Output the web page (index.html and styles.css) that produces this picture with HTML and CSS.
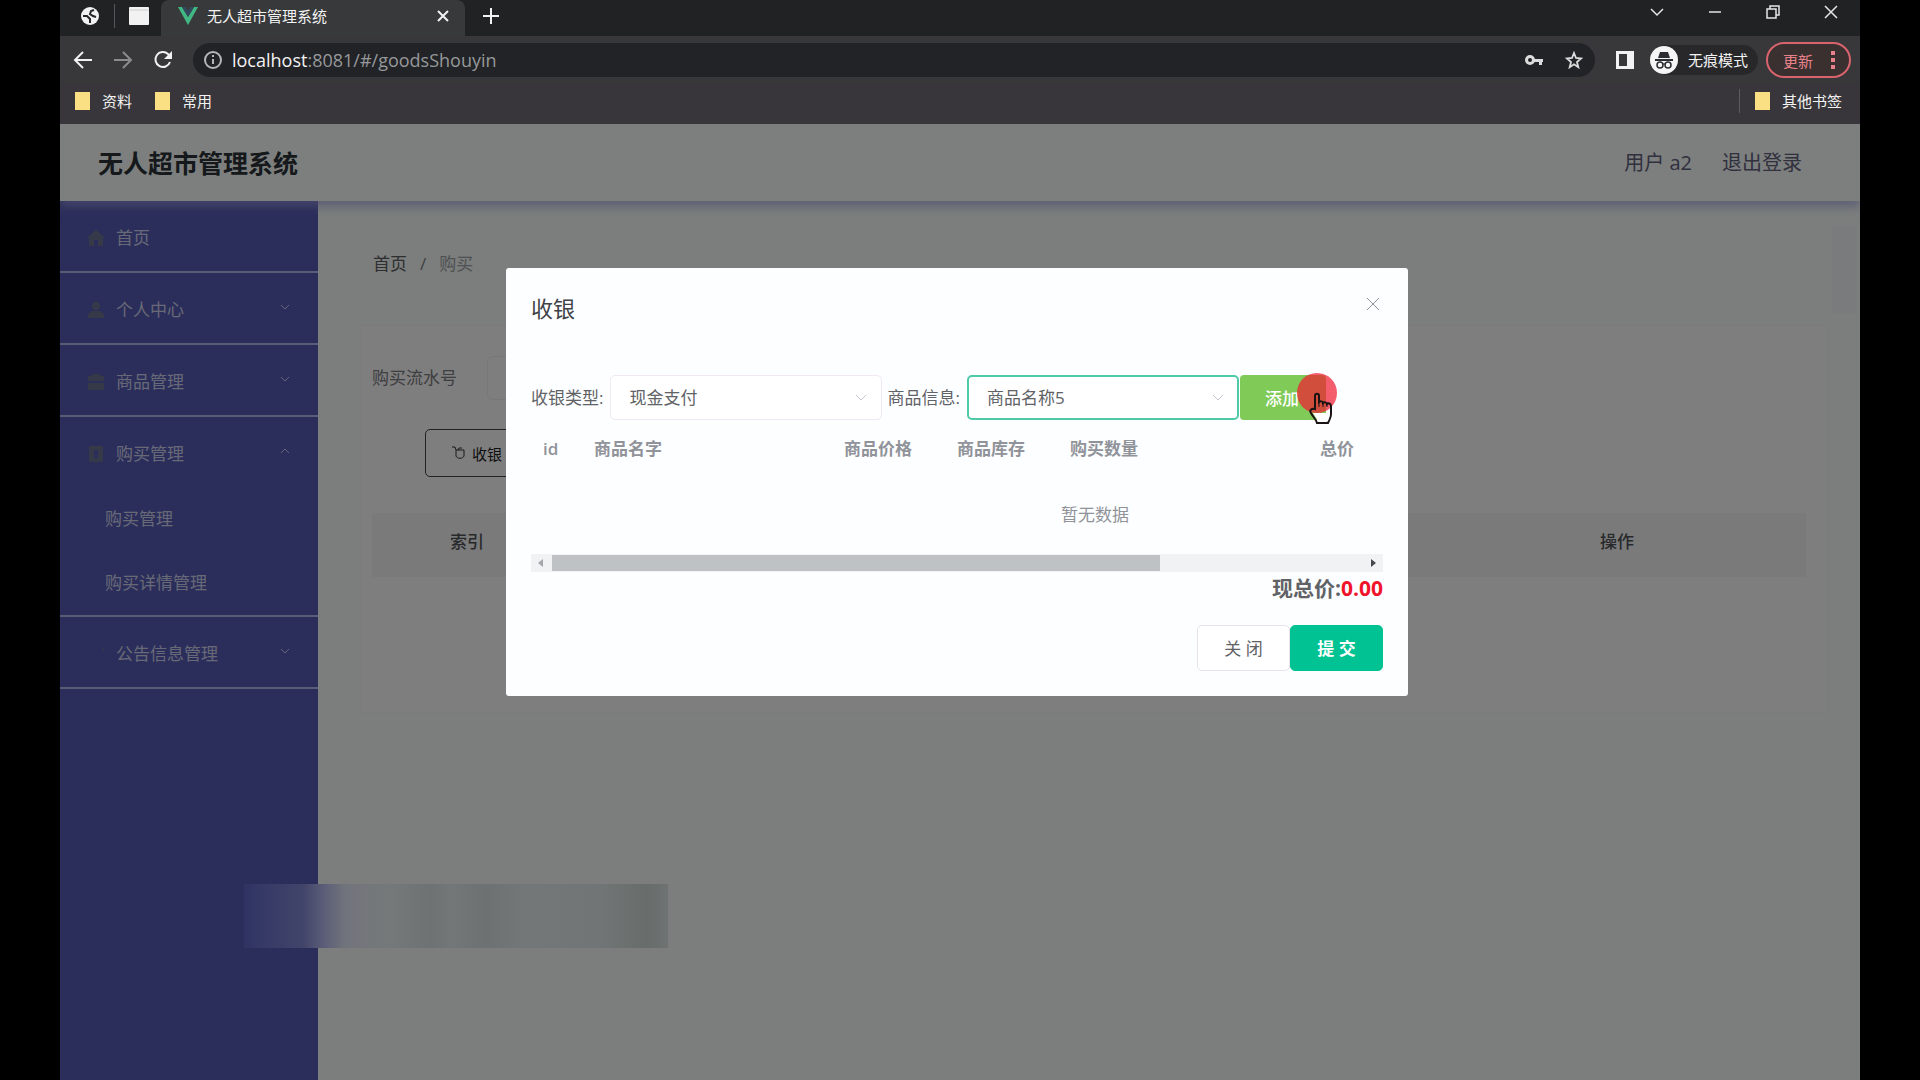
FILE: index.html
```
<!DOCTYPE html>
<html lang="zh-CN">
  <head>
    <meta charset="UTF-8" />
    <meta name="viewport" content="width=device-width, initial-scale=1.0" />
    <title>无人超市管理系统</title>
    <link rel="stylesheet" href="styles.css" />
  </head>
  <body>
    <div class="window">
      <!-- start tabs -->
      <div class="tab-bar">
        <div class="pinned">
          <button class="icon-btn" aria-label="Globe tab">
            <svg width="20" height="20" viewBox="0 0 20 20">
              <circle cx="10" cy="10" r="9" fill="#f2f2f2" />
              <path d="M3 10h4l3 3v4M14 4l-3 1-1 3 3 2 3 1" fill="none" stroke="#25272a" stroke-width="2" />
            </svg>
          </button>
          <span class="pin-line"></span>
          <button class="icon-btn" aria-label="Blank tab">
            <svg width="20" height="18" viewBox="0 0 20 18">
              <rect width="20" height="18" rx="1" fill="#f2f2f2" />
              <path d="M0 3h20" stroke="#cfcfcf" />
            </svg>
          </button>
        </div>
        <div class="tab">
          <svg width="20" height="18" viewBox="0 0 20 18">
            <path d="M0 0h4l6 10 6-10h4L10 18z" fill="#41b883" />
            <path d="M4 0h4l2 4 2-4h4l-6 10z" fill="#35495e" />
          </svg>
          <span class="tab-title">无人超市管理系统</span>
          <button class="icon-btn" aria-label="Close tab">
            <svg width="12" height="12" viewBox="0 0 12 12"><path d="M1 1l10 10M11 1L1 11" class="line" /></svg>
          </button>
        </div>
        <button class="icon-btn new-tab" aria-label="New tab">
          <svg width="16" height="16" viewBox="0 0 16 16"><path d="M8 0v16M0 8h16" class="line" /></svg>
        </button>
        <div class="win-btns">
          <button class="icon-btn" aria-label="Search tabs">
            <svg width="14" height="14" viewBox="0 0 14 14"><path d="M1 4l6 6 6-6" class="thin" /></svg>
          </button>
          <button class="icon-btn" aria-label="Minimize">
            <svg width="14" height="14" viewBox="0 0 14 14"><path d="M1 7h12" class="thin" /></svg>
          </button>
          <button class="icon-btn" aria-label="Restore">
            <svg width="14" height="14" viewBox="0 0 14 14"><path d="M1 4h9v9H1zM4 4V1h9v9h-3" class="thin" /></svg>
          </button>
          <button class="icon-btn" aria-label="Close">
            <svg width="14" height="14" viewBox="0 0 14 14"><path d="M1 1l12 12M13 1L1 13" class="thin" /></svg>
          </button>
        </div>
      </div>
      <!-- end tabs -->

      <!-- start toolbar -->
      <div class="toolbar">
        <button class="icon-btn" aria-label="Back">
          <svg width="20" height="20" viewBox="0 0 20 20"><path d="M19 10H2M10 2l-8 8 8 8" class="line" /></svg>
        </button>
        <button class="icon-btn dim" aria-label="Forward">
          <svg width="20" height="20" viewBox="0 0 20 20"><path d="M1 10h17M10 2l8 8-8 8" class="line" /></svg>
        </button>
        <button class="icon-btn" aria-label="Reload">
          <svg width="20" height="20" viewBox="0 0 20 20">
            <path d="M17 12a7.500 7.500 0 1 1-2-8l2 2" class="line" />
            <path d="M19 1v8h-8z" fill="#f2f2f2" />
          </svg>
        </button>
        <div class="address">
          <svg width="18" height="18" viewBox="0 0 18 18">
            <circle cx="9" cy="9" r="8" fill="none" stroke="#b4b6b9" stroke-width="2" />
            <path d="M9 8v5M9 4v2" stroke="#b4b6b9" stroke-width="2" />
          </svg>
          <span class="url"><b>localhost</b>:8081/#/goodsShouyin</span>
          <button class="icon-btn" aria-label="Passwords">
            <svg width="18" height="12" viewBox="0 0 18 12">
              <circle cx="5" cy="6" r="3.500" fill="none" stroke="#dcdcdc" stroke-width="3" />
              <path d="M9 5h9v3h-1v3h-3V8H9z" fill="#dcdcdc" />
            </svg>
          </button>
          <button class="icon-btn" aria-label="Bookmark">
            <svg width="18" height="18" viewBox="0 0 18 18">
              <path d="M9 2l2 5 5 .5-4 3.500 1.300 5.200L9 13.300l-4.300 2.900L6 11 2 7.500 7 7z" fill="none" stroke="#dcdcdc" stroke-width="1.800" />
            </svg>
          </button>
        </div>
        <button class="icon-btn" aria-label="Side panel">
          <svg width="18" height="18" viewBox="0 0 18 18">
            <path d="M1.500 1.500h15v15h-15z" fill="none" stroke="#f2f2f2" stroke-width="3" />
            <path d="M11 1h6v16h-6z" fill="#f2f2f2" />
          </svg>
        </button>
        <div class="incognito">
          <svg width="28" height="28" viewBox="0 0 28 28">
            <circle cx="14" cy="14" r="14" fill="#f5f5f5" />
            <path d="M10 6h8l2 6H8zM5 13h18v2H5z" fill="#2b2c30" />
            <circle cx="10" cy="19" r="3" fill="none" stroke="#2b2c30" stroke-width="1.500" />
            <circle cx="18" cy="19" r="3" fill="none" stroke="#2b2c30" stroke-width="1.500" />
            <path d="M12 18h4" stroke="#2b2c30" />
          </svg>
          <span>无痕模式</span>
        </div>
        <button class="update-btn">
          更新
          <svg width="4" height="18" viewBox="0 0 4 18">
            <path d="M0 0h4v4H0zM0 7h4v4H0zM0 14h4v4H0z" fill="#e8828a" />
          </svg>
        </button>
      </div>
      <div class="bookmarks">
        <a href="#" class="bookmark"><span class="folder"></span>资料</a>
        <a href="#" class="bookmark"><span class="folder"></span>常用</a>
        <a href="#" class="bookmark other"><span class="folder"></span>其他书签</a>
      </div>
      <!-- end toolbar -->

      <div class="page">
        <header class="header">
          <h1 class="site-title">无人超市管理系统</h1>
          <span class="user">用户 a2</span>
          <a href="#" class="logout">退出登录</a>
        </header>

        <div class="layout">
          <!-- start sidebar -->
          <nav class="sidebar">
            <div class="menu-group">
              <a href="#" class="menu-item">
                <svg class="menu-icon" viewBox="0 0 18 18"><path d="M9 1l9 8h-2v8h-5v-6H7v6H2V9H0z" /></svg>
                首页
              </a>
            </div>
            <div class="menu-group">
              <a href="#" class="menu-item">
                <svg class="menu-icon" viewBox="0 0 18 18"><circle cx="9" cy="5" r="4" /><path d="M1 17v-4l4-3h8l4 3v4z" /></svg>
                个人中心
                <svg class="arrow" viewBox="0 0 10 6"><path d="M1 1l4 4 4-4" /></svg>
              </a>
            </div>
            <div class="menu-group">
              <a href="#" class="menu-item">
                <svg class="menu-icon" viewBox="0 0 18 18"><path d="M1 3h4V1h8v2h4v5H1zM1 10h16v7H1z" /></svg>
                商品管理
                <svg class="arrow" viewBox="0 0 10 6"><path d="M1 1l4 4 4-4" /></svg>
              </a>
            </div>
            <div class="menu-group">
              <a href="#" class="menu-item">
                <svg class="menu-icon" viewBox="0 0 18 18"><path d="M2 1h14v16H2zM7 5v8h4V5z" fill-rule="evenodd" /></svg>
                购买管理
                <svg class="arrow" viewBox="0 0 10 6"><path d="M1 5l4-4 4 4" /></svg>
              </a>
              <a href="#" class="sub-item">购买管理</a>
              <a href="#" class="sub-item">购买详情管理</a>
            </div>
            <div class="menu-group">
              <a href="#" class="menu-item">
                <svg class="menu-icon faint" viewBox="0 0 18 18"><path d="M15 1l2 2v4l-2-2z" /></svg>
                公告信息管理
                <svg class="arrow" viewBox="0 0 10 6"><path d="M1 1l4 4 4-4" /></svg>
              </a>
            </div>
          </nav>
          <!-- end sidebar -->

          <main class="content">
            <div class="breadcrumb">
              <a href="#">首页</a><span>/</span><span class="current">购买</span>
            </div>
            <section class="card">
              <div class="search-row">
                <label for="serial">购买流水号</label>
                <input type="text" id="serial" class="serial-input" />
              </div>
              <button class="cashier-btn">
                <svg width="14" height="14" viewBox="0 0 14 14">
                  <path d="M0 1h3l1 3v6c1 3 7 3 8 0V4H4M6 4l1-2h3" fill="none" stroke="#333" />
                </svg>
                收银
              </button>
              <table class="list-table">
                <tr>
                  <th class="col-index">索引</th>
                  <th></th>
                  <th class="col-action">操作</th>
                </tr>
              </table>
            </section>
          </main>
          <div class="page-scroll"></div>
        </div>

        <!-- start dialog -->
        <div class="mask">
          <div class="dialog" role="dialog" aria-labelledby="dialog-title">
            <div class="dialog-header">
              <h2 id="dialog-title" class="dialog-title">收银</h2>
              <button class="dialog-close" aria-label="Close">
                <svg width="14" height="14" viewBox="0 0 14 14"><path d="M1 1l12 12M13 1L1 13" fill="none" stroke="#909399" /></svg>
              </button>
            </div>
            <div class="form-row">
              <label for="pay-type">收银类型:</label>
              <div class="select-box">
                <select id="pay-type"><option>现金支付</option></select>
                <svg class="select-arrow" viewBox="0 0 12 8"><path d="M1 1l5 5 5-5" /></svg>
              </div>
              <label for="goods">商品信息:</label>
              <div class="select-box is-focus">
                <select id="goods"><option>商品名称5</option></select>
                <svg class="select-arrow" viewBox="0 0 12 8"><path d="M1 1l5 5 5-5" /></svg>
              </div>
              <button class="add-btn">
                添加
                <svg class="pointer" viewBox="0 0 42 54">
                  <circle cx="20" cy="20" r="20" fill="#f01e32" fill-opacity=".72" />
                  <path d="M18 36V23c0-3 4-3 4 0v6c1-1 4-1 4 1 1-1 4-1 4 1 1-1 4-1 4 2v8c0 4-2 6-3 9H20c-1-4-4-6-6-10-2-3 1-5 4-4z" fill="none" stroke="#1b1214" stroke-width="2" />
                  <path d="M16 40h17l-2 8H21z" fill="#fff" />
                  <path d="M22 28v6M26 30v4M30 31v3" stroke="#1b1214" />
                </svg>
              </button>
            </div>
            <div class="goods-wrap">
              <table class="goods-table">
                <thead>
                  <tr>
                    <th class="w-id">id</th>
                    <th class="w-wide">商品名字</th>
                    <th class="w-small">商品价格</th>
                    <th class="w-small">商品库存</th>
                    <th class="w-wide">购买数量</th>
                    <th>总价</th>
                  </tr>
                </thead>
                <tbody>
                  <tr><td colspan="6" class="empty">暂无数据</td></tr>
                </tbody>
              </table>
            </div>
            <div class="h-scroll">
              <span class="scroll-left"></span>
              <div class="scroll-track"><div class="scroll-thumb"></div></div>
              <span class="scroll-right"></span>
            </div>
            <p class="total">现总价:<span class="total-num">0.00</span></p>
            <div class="dialog-footer">
              <button class="close-btn">关 闭</button>
              <button class="submit-btn">提 交</button>
            </div>
          </div>
        </div>
        <!-- end dialog -->

        <div class="blur-strip"></div>
      </div>
    </div>
  </body>
</html>
```

FILE: styles.css
```
* {
  box-sizing: border-box;
}
body {
  margin: 0;
  padding: 0 60px;
  background-color: black;
  font-family: "Open Sans", "Noto Sans CJK SC", sans-serif;
  font-size: 17px;
  line-height: 24px;
}
button,
input,
select {
  font-family: inherit;
  font-size: inherit;
}
button {
  cursor: pointer;
}
a {
  color: inherit;
  text-decoration: none;
}
svg {
  display: block;
  flex: none;
}
.window {
  display: flex;
  flex-direction: column;
  min-height: 100vh;
}

/* browser bars */
.icon-btn {
  display: flex;
  padding: 0;
  border: none;
  background: none;
}
.dim {
  opacity: 0.45;
}
.line {
  fill: none;
  stroke: #f2f2f2;
  stroke-width: 2;
}
.thin {
  fill: none;
  stroke: #e6e6e6;
  stroke-width: 1.5;
}
.tab-bar {
  display: flex;
  height: 36px;
  background-color: #202224;
  color: #f2f2f2;
  font-size: 15px;
}
.pinned {
  display: flex;
  align-items: center;
  gap: 14px;
  padding: 0 12px 4px 20px;
}
.pin-line {
  width: 1px;
  height: 24px;
  background-color: #55575a;
}
.tab {
  display: flex;
  align-items: center;
  gap: 9px;
  width: 304px;
  padding: 0 16px 4px 17px;
  border-radius: 8px 8px 0 0;
  background-color: #37393b;
}
.tab-title {
  flex: 1;
}
.new-tab {
  align-items: center;
  padding: 0 0 4px 18px;
}
.win-btns {
  display: flex;
  align-items: center;
  gap: 44px;
  margin-left: auto;
  padding: 0 22px 12px 0;
}
.toolbar {
  display: flex;
  align-items: center;
  gap: 20px;
  height: 48px;
  padding: 0 9px 0 13px;
  background-color: #38373a;
  color: #f2f2f2;
  font-size: 15px;
}
.address {
  display: flex;
  flex: 1;
  align-items: center;
  gap: 10px;
  height: 34px;
  padding: 0 12px 0 11px;
  margin-right: 1px;
  border-radius: 17px;
  background-color: #222326;
}
.address .icon-btn {
  margin-left: 12px;
}
.url {
  flex: 1;
  color: #96989b;
  font-size: 18px;
}
.url b {
  color: #f2f2f2;
  font-weight: 500;
}
.incognito {
  display: flex;
  align-items: center;
  gap: 10px;
  height: 30px;
  margin: 0 -12px 0 -4px;
  padding-right: 10px;
  border-radius: 15px;
  background-color: #28282b;
}
.update-btn {
  display: flex;
  align-items: center;
  gap: 18px;
  height: 36px;
  padding: 0 14px 0 15px;
  border: 2px solid #d9646e;
  border-radius: 18px;
  background-color: #3a3030;
  color: #e8828a;
}
.bookmarks {
  display: flex;
  align-items: center;
  gap: 23px;
  height: 40px;
  padding: 0 18px 6px 15px;
  background-color: #38363a;
  color: #f2f2f2;
  font-size: 15px;
}
.bookmark {
  display: flex;
  align-items: center;
  gap: 12px;
}
.folder {
  width: 15px;
  height: 18px;
  background-color: #fbe083;
}
.other {
  margin-left: auto;
  padding-left: 15px;
  border-left: 1px solid #5c5c60;
}

/* page under the mask */
.page {
  position: relative;
  display: flex;
  flex: 1;
  flex-direction: column;
  overflow: hidden;
  background-color: #f6fcfa;
}
.header {
  position: relative;
  display: flex;
  align-items: center;
  gap: 30px;
  height: 77px;
  padding: 0 58px 0 38px;
  background-color: #fafffc;
  box-shadow: 0 6px 8px rgba(160, 160, 225, 0.6);
  color: #60607c;
  font-size: 20px;
}
.site-title {
  flex: 1;
  margin: 0;
  color: #2c3238;
  font-size: 25px;
  font-weight: 700;
}
.layout {
  display: flex;
  flex: 1;
}
.sidebar {
  width: 258px;
  background-color: #565cb6;
  color: #d0d2ec;
}
.menu-group {
  border-bottom: 2px solid #b4b6ea;
}
.menu-item {
  display: flex;
  align-items: center;
  gap: 11px;
  height: 70px;
  padding: 3px 28px 0 27px;
}
.menu-icon {
  width: 18px;
  height: 18px;
  fill: #6c7490;
}
.faint {
  opacity: 0.5;
}
.arrow {
  width: 10px;
  height: 6px;
  margin: 0 0 6px auto;
  fill: none;
  stroke: #c8caec;
}
.sub-item {
  display: flex;
  align-items: center;
  height: 64px;
  padding-left: 45px;
}
.content {
  flex: 1;
  padding: 51px 3px 0 41px;
  color: #7c7e82;
}
.breadcrumb {
  display: flex;
  gap: 13px;
  padding-left: 14px;
}
.breadcrumb a {
  color: #5c5e62;
}
.current {
  color: #a0a3a8;
}
.card {
  min-height: 390px;
  margin-top: 48px;
  padding: 30px 21px 0 11px;
  border: 2px solid #f8f8fa;
  border-radius: 4px;
  background-color: #fdfdff;
}
.search-row {
  display: flex;
  align-items: center;
  gap: 30px;
  height: 44px;
}
.serial-input {
  width: 220px;
  height: 44px;
  border: 1px solid #f0f0f2;
  border-radius: 5px;
  background-color: transparent;
}
.cashier-btn {
  display: flex;
  align-items: center;
  gap: 6px;
  height: 48px;
  margin: 29px 0 0 53px;
  padding: 0 26px;
  border: 1px solid #444;
  border-radius: 5px;
  background-color: transparent;
  color: #222;
  font-size: 15px;
}
.list-table {
  width: 100%;
  margin-top: 36px;
  border-collapse: collapse;
}
.list-table th {
  height: 64px;
  padding: 0 0 6px;
  background-color: #f4f5f7;
  color: #505256;
  font-weight: 500;
}
.col-index {
  width: 190px;
}
.col-action {
  width: 378px;
}
.page-scroll {
  width: 24px;
  height: 88px;
  margin: 24px 4px 0 0;
  background-color: #f2f7f9;
}

/* dialog */
.mask {
  position: absolute;
  inset: 0;
  display: flex;
  align-items: flex-start;
  justify-content: center;
  padding: 144px 6px 0 0;
  background-color: rgba(0, 0, 0, 0.5);
}
.dialog {
  width: 902px;
  max-width: 90%;
  padding: 25px;
  border-radius: 3px;
  background-color: #fdfeff;
  color: #606266;
}
.dialog-header {
  display: flex;
  justify-content: space-between;
  height: 82px;
}
.dialog-title {
  margin: 0;
  color: #404246;
  font-size: 22px;
  font-weight: 400;
  line-height: 30px;
}
.dialog-close {
  height: 22px;
  padding: 0 3px;
  border: none;
  background: none;
}
.form-row {
  display: flex;
  align-items: center;
}
.select-box {
  position: relative;
  width: 272px;
  margin: 0 5px 0 7px;
}
.select-box select {
  display: block;
  width: 100%;
  height: 45px;
  padding: 0 30px 0 18px;
  border: 1px solid #f0e8f2;
  border-radius: 5px;
  appearance: none;
  background-color: white;
  color: #606266;
}
.is-focus {
  margin-right: 1px;
}
.is-focus select {
  border: 2px solid #4fcaa9;
}
.select-arrow {
  position: absolute;
  top: 19px;
  right: 15px;
  width: 12px;
  height: 8px;
  fill: none;
  stroke: #c8c4d0;
}
.add-btn {
  position: relative;
  height: 45px;
  padding: 0 27px 0 25px;
  border: none;
  border-radius: 4px;
  background-color: #80ca58;
  color: white;
  font-weight: 500;
}
.pointer {
  position: absolute;
  top: -2px;
  left: 57px;
  width: 42px;
  height: 54px;
}
.goods-wrap {
  overflow: hidden;
}
.goods-table {
  width: 1128px;
  border-collapse: collapse;
  table-layout: fixed;
  color: #909399;
}
.goods-table th {
  height: 56px;
  padding: 2px 12px 0;
  font-weight: 600;
  text-align: left;
}
.w-id {
  width: 51px;
}
.w-small {
  width: 113px;
}
.w-wide {
  width: 250px;
}
.goods-table .empty {
  height: 78px;
  padding: 0;
  text-align: center;
}
.h-scroll {
  display: flex;
  align-items: center;
  height: 18px;
  padding: 0 7px;
  background-color: #f1f2f4;
}
.scroll-left,
.scroll-right {
  border: 4px solid transparent;
  border-right: 5px solid #a4a6aa;
  border-left: none;
}
.scroll-right {
  border-right: none;
  border-left: 5px solid #45474a;
}
.scroll-track {
  flex: 1;
  margin: 0 9px;
}
.scroll-thumb {
  width: 75%;
  height: 16px;
  background-color: #bfc2c5;
}
.total {
  margin: 0;
  padding-top: 2px;
  font-size: 21px;
  font-weight: 700;
  line-height: 28px;
  text-align: right;
}
.total-num {
  color: #f0142a;
}
.dialog-footer {
  display: flex;
  justify-content: flex-end;
  padding-top: 23px;
}
.close-btn,
.submit-btn {
  width: 93px;
  height: 46px;
  padding: 0 0 2px;
  border: 1px solid #e6e3ea;
  border-radius: 5px;
  background-color: white;
  color: #606266;
}
.submit-btn {
  border-color: #00c292;
  background-color: #00c292;
  color: white;
  font-weight: 700;
}
.blur-strip {
  position: absolute;
  bottom: 132px;
  left: 184px;
  width: 424px;
  height: 64px;
  background: linear-gradient(
    to right,
    #303464,
    #42456a 14%,
    #5c5e78 19%,
    #72747c 24%,
    #757979 34%,
    #6e7272 44%,
    #737777 49%,
    #6d7171 57%,
    #737777 66%,
    #717575 84%,
    #686c6b 95%,
    #6e7272
  );
}
```
